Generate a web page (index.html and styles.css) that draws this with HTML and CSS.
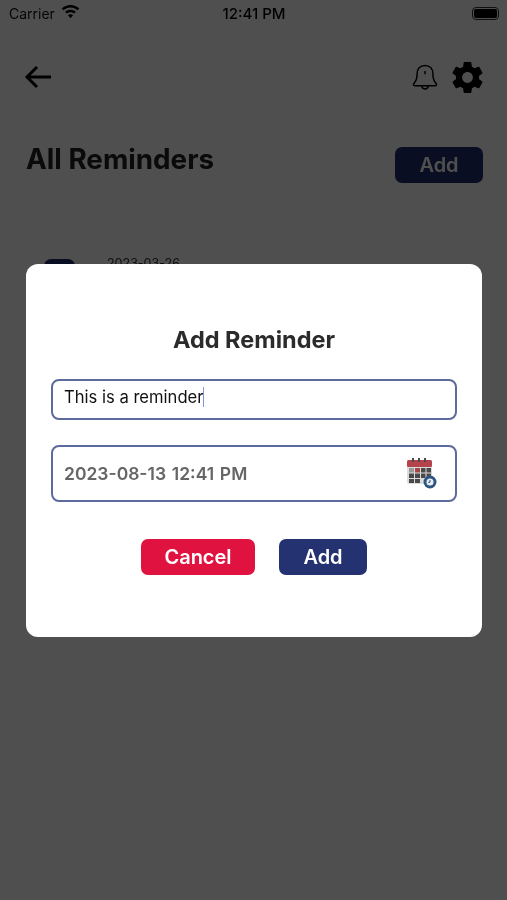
FILE: index.html
```html
<!DOCTYPE html>
<html lang="en">
<head>
  <meta charset="UTF-8">
  <title>All Reminders</title>
  <link rel="stylesheet" href="styles.css">
</head>
<body>
  <div class="screen">
    <div class="status-bar">
      <div class="status-left">
        <span>Carrier</span>
        <svg class="wifi" width="19" height="15" viewBox="0 0 18 14">
          <path d="M9 .8c3.200 0 6.100 1.200 8.300 3.300l-1.600 1.700C13.900 4.100 11.600 3.100 9 3.100S4.100 4.100 2.300 5.800L.7 4.100C2.900 2 5.800.8 9 .8z"/>
          <path d="M9 5.300c2 0 3.800.8 5.100 2l-1.600 1.700C11.600 8.100 10.400 7.600 9 7.600s-2.600.5-3.500 1.400L3.900 7.300c1.300-1.200 3.100-2 5.100-2z"/>
          <path d="M9 9.700c1 0 1.800.4 2.400.9L9 13.300l-2.400-2.700c.6-.5 1.400-.9 2.400-.9z"/>
        </svg>
      </div>
      <div class="status-time">12:41 PM</div>
      <div class="status-right">
        <div class="battery"><div class="battery-level"></div></div>
      </div>
    </div>

    <div class="nav">
      <svg width="30" height="24" viewBox="0 0 30 24" fill="none" stroke="#000" stroke-width="3">
        <path d="M27 12H3"/>
        <path d="M13 2 3 12l10 10"/>
      </svg>
      <div class="nav-icons">
        <svg width="26" height="29" viewBox="0 0 28 30" fill="none" stroke="#000" stroke-width="1.600">
          <path d="M14 2c-5.500 0-8.500 4-8.500 9 0 5-1 8-3.500 10.500-.8 1-.2 2.500 1.200 2.500h21.600c1.400 0 2-1.500 1.200-2.500C23.500 19 22.500 16 22.500 11c0-5-3-9-8.500-9z"/>
          <path d="M10.500 24.500c.6 2 1.900 3 3.500 3s2.900-1 3.500-3"/>
          <path d="M14 8v3.500"/>
        </svg>
        <svg class="gear" width="37" height="37" viewBox="0 0 24 24">
          <path d="M19.430 12.980c.04-.32.070-.64.070-.98s-.03-.66-.07-.98l2.110-1.650c.19-.15.240-.42.120-.64l-2-3.460c-.12-.22-.39-.3-.61-.22l-2.490 1c-.52-.4-1.080-.73-1.690-.98l-.38-2.650C14.460 2.180 14.250 2 14 2h-4c-.25 0-.46.180-.49.420l-.38 2.650c-.61.250-1.170.590-1.690.980l-2.490-1c-.23-.090-.49 0-.61.220l-2 3.460c-.13.220-.07.490.12.640l2.110 1.650c-.04.320-.07.650-.07.980s.03.660.07.980l-2.110 1.650c-.19.150-.24.420-.12.640l2 3.460c.12.220.39.300.61.220l2.490-1c.52.400 1.080.730 1.690.980l.38 2.650c.03.240.24.420.49.420h4c.25 0 .46-.180.49-.420l.38-2.650c.61-.250 1.170-.590 1.690-.980l2.490 1c.23.090.49 0 .61-.220l2-3.460c.12-.220.07-.490-.12-.640l-2.110-1.650zM12 15.500c-1.930 0-3.500-1.570-3.500-3.500s1.570-3.500 3.500-3.500 3.500 1.570 3.500 3.500-1.570 3.500-3.500 3.500z"/>
        </svg>
      </div>
    </div>

    <div class="title-row">
      <h1>All Reminders</h1>
      <button class="btn btn-add-top">Add</button>
    </div>

    <div class="reminder">
      <div class="reminder-tag"></div>
      <div class="reminder-date">2023-03-26</div>
    </div>
  </div>

  <div class="overlay">
    <div class="modal">
      <h2>Add Reminder</h2>
      <div class="field field-text">This is a reminder<span class="caret"></span></div>
      <div class="field field-date">
        <span>2023-08-13 12:41 PM</span>
        <svg width="32" height="32" viewBox="0 0 32 32">
          <rect x="1" y="3" width="25" height="24" rx="2" fill="#dcdcdc"/>
          <rect x="1" y="3" width="25" height="7" rx="1.500" fill="#b5434b"/>
          <g fill="#4a4a4a">
            <rect x="6" y="1" width="2" height="4"/>
            <rect x="12" y="1" width="2" height="4"/>
            <rect x="18" y="1" width="2" height="4"/>
            <rect x="3" y="11" width="5" height="4.500" fill="#999"/>
            <rect x="9" y="11" width="5" height="4.500" fill="#a44"/>
            <rect x="15" y="11" width="4.500" height="4.500"/>
            <rect x="20.500" y="11" width="4.500" height="4.500"/>
            <rect x="3" y="16.500" width="5" height="4.500"/>
            <rect x="9" y="16.500" width="5" height="4.500"/>
            <rect x="15" y="16.500" width="4.500" height="4.500"/>
            <rect x="20.500" y="16.500" width="4.500" height="4.500"/>
            <rect x="3" y="22" width="5" height="4"/>
            <rect x="9" y="22" width="5" height="4"/>
          </g>
          <circle cx="24" cy="25" r="6.500" fill="#2d5680"/>
          <circle cx="24" cy="25" r="3.500" fill="#e8eef4"/>
          <path d="M24 23v2.300h-1.800" fill="none" stroke="#2d5680"/>
        </svg>
      </div>
      <div class="modal-buttons">
        <button class="btn btn-cancel">Cancel</button>
        <button class="btn btn-save">Add</button>
      </div>
    </div>
  </div>
</body>
</html>
```

FILE: styles.css
```css
* {
  box-sizing: border-box;
}
body {
  margin: 0;
  background: #fff;
  font-family: Inter, "Liberation Sans", sans-serif;
  color: #000;
}
.screen {
  width: 507px;
  height: 900px;
  overflow: hidden;
  filter: blur(0.5px);
}
.status-bar {
  display: flex;
  align-items: center;
  height: 26px;
  padding: 0 8px 0 9px;
  font-size: 14px;
}
.status-left {
  flex: 1;
  display: flex;
  align-items: center;
  gap: 6px;
  color: #111;
}
.status-right {
  flex: 1;
  display: flex;
  justify-content: flex-end;
}
.wifi {
  margin-top: -3px;
}
.status-time {
  font-size: 15px;
  font-weight: 500;
}
.battery {
  width: 27px;
  height: 13px;
  border: 1px solid #333;
  border-radius: 4px;
  padding: 1px;
}
.battery-level {
  height: 100%;
  background: #000;
  border-radius: 2px;
}
.nav {
  display: flex;
  justify-content: space-between;
  align-items: center;
  padding: 0 21px 0 24px;
  margin-top: 23px;
  height: 56px;
}
.nav-icons {
  display: flex;
  align-items: center;
  gap: 11px;
}
.title-row {
  display: flex;
  justify-content: space-between;
  align-items: flex-start;
  padding: 0 24px 0 26px;
  margin-top: 38px;
}
h1 {
  margin: 0;
  font-size: 27.800px;
  line-height: 32px;
  font-weight: 700;
  color: #222;
}
.btn {
  border: none;
  border-radius: 7px;
  font-family: inherit;
  font-size: 20px;
  font-weight: 600;
  color: #fff;
  height: 36px;
  padding: 0;
}
.btn-add-top {
  width: 88px;
  margin-top: 4px;
  background: #232f6e;
}
.reminder {
  display: flex;
  gap: 32px;
  padding: 0 44px;
  margin-top: 76px;
}
.reminder-tag {
  width: 31px;
  height: 40px;
  border-radius: 7px;
  background: #232f6e;
}
.reminder-date {
  font-size: 12.500px;
  color: #333;
  margin-top: -3px;
}
.overlay {
  position: fixed;
  top: 0;
  left: 0;
  width: 507px;
  height: 900px;
  background: rgba(0, 0, 0, 0.69);
  display: flex;
  align-items: center;
  justify-content: center;
  padding-left: 1px;
}
.modal {
  width: 456px;
  height: 373px;
  background: #fff;
  border-radius: 12px;
  padding: 61px 25px 0;
  filter: blur(0.4px);
}
h2 {
  margin: 0 0 24px;
  font-size: 23.500px;
  line-height: 30px;
  font-weight: 700;
  text-align: center;
  color: #2b2b2b;
}
.field {
  border: 2px solid #5d6a9c;
  border-radius: 8px;
  display: flex;
  align-items: center;
  padding: 0 11px;
}
.field-text {
  height: 41px;
  font-size: 16.600px;
  padding-bottom: 4px;
  color: #111;
  margin-bottom: 25px;
}
.caret {
  width: 1px;
  height: 20px;
  background: #7f95e0;
}
.field-date {
  height: 57px;
  justify-content: space-between;
  padding-right: 17px;
  font-size: 17.500px;
  font-weight: 600;
  word-spacing: 1.300px;
  color: #666;
}
.modal-buttons {
  display: flex;
  justify-content: center;
  gap: 24px;
  margin-top: 37px;
}
.btn-cancel {
  width: 114px;
  background: #e0123f;
}
.btn-save {
  width: 88px;
  background: #253272;
}
```
